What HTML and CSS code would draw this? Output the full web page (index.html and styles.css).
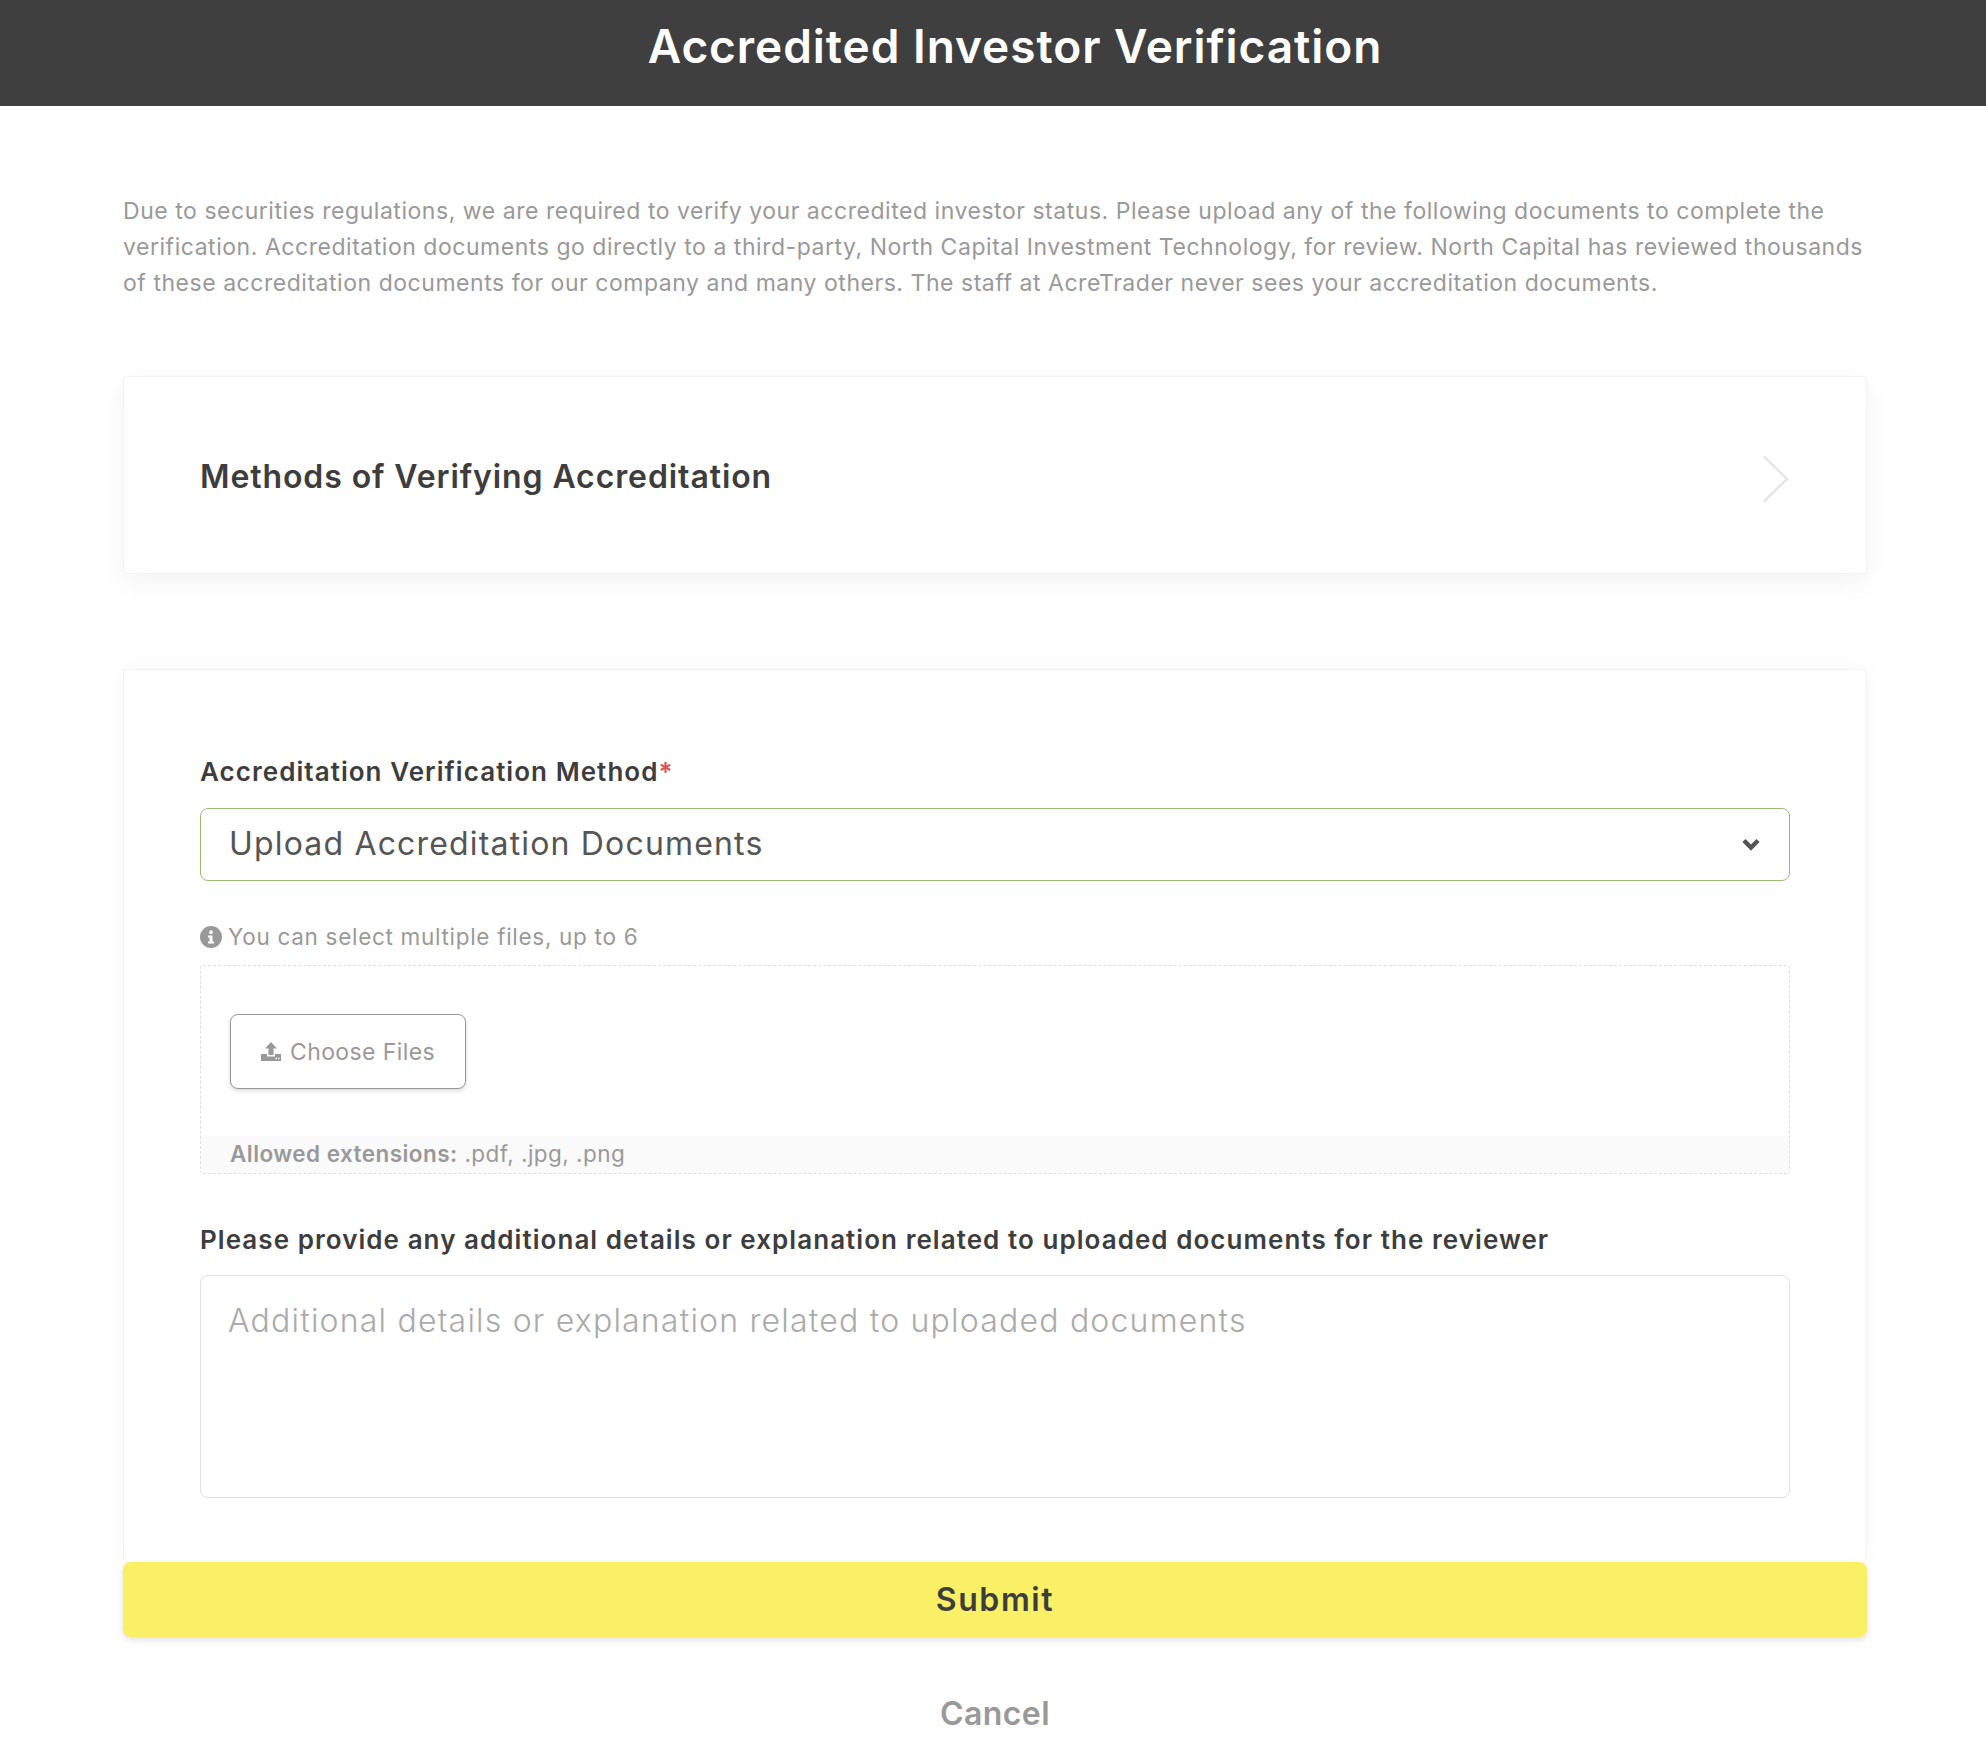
FILE: index.html
```html
<!DOCTYPE html>
<html lang="en">
<head>
    <meta charset="UTF-8">
    <title>Accredited Investor Verification</title>
    <link rel="stylesheet" href="styles.css">
</head>
<body>
    <header class="top-bar">
        <h1>Accredited Investor Verification</h1>
    </header>

    <main class="content">
        <p class="intro">Due to securities regulations, we are required to verify your accredited investor status. Please upload any of the following documents to complete the verification. Accreditation documents go directly to a third-party, North Capital Investment Technology, for review. North Capital has reviewed thousands of these accreditation documents for our company and many others. The staff at AcreTrader never sees your accreditation documents.</p>

        <section class="card methods">
            <h2>Methods of Verifying Accreditation</h2>
            <svg class="methods-arrow" width="28" height="48" viewBox="0 0 28 48">
                <path d="M2 1.500 L25 24 L2 46.500" fill="none" stroke="#e6e6e6" stroke-width="2.500"/>
            </svg>
        </section>

        <form class="card verify-form">
            <label class="field-label">Accreditation Verification Method<span class="required">*</span></label>
            <div class="select-box">
                <span>Upload Accreditation Documents</span>
                <svg width="20" height="15" viewBox="0 0 20 15">
                    <path d="M3 3.500 L10 10.500 L17 3.500" fill="none" stroke="#555" stroke-width="4.500"/>
                </svg>
            </div>

            <p class="files-note">
                <svg width="22" height="22" viewBox="0 0 22 22">
                    <circle cx="11" cy="11" r="11" fill="#999"/>
                    <circle cx="11" cy="6.200" r="1.900" fill="#fff"/>
                    <path d="M8 9.500h4.500v6H14v2H8v-2h1.500v-4H8z" fill="#fff"/>
                </svg>
                You can select multiple files, up to 6
            </p>
            <div class="dropzone">
                <div class="dropzone-body">
                    <button type="button" class="choose-btn">
                        <svg width="20" height="19" viewBox="0 0 20 19">
                            <path d="M10 0 L16 6.500 H12.500 V13 H7.500 V6.500 H4 Z M0 12 H6 V14.500 H14 V12 H20 V19 H0 Z" fill="#999"/>
                            <path d="M14.500 15.800h1.500v1.500h-1.500z M17 15.800h1.500v1.500H17z" fill="#fff"/>
                        </svg>
                        Choose Files
                    </button>
                </div>
                <div class="dropzone-foot"><b>Allowed extensions:</b> .pdf, .jpg, .png</div>
            </div>

            <label class="field-label details-label">Please provide any additional details or explanation related to uploaded documents for the reviewer</label>
            <textarea class="details" placeholder="Additional details or explanation related to uploaded documents"></textarea>
        </form>

        <button type="button" class="submit-btn">Submit</button>
        <a class="cancel-link">Cancel</a>
    </main>
</body>
</html>
```

FILE: styles.css
```css
* {
    box-sizing: border-box;
}

body {
    margin: 0;
    font-family: 'Inter', sans-serif;
    background-color: #fff;
    color: #3d3d3d;
}

.top-bar {
    height: 106px;
    background-color: #3f3f3f;
    text-align: center;
    padding-left: 44px;
}

.top-bar h1 {
    margin: 0;
    color: #fff;
    font-size: 46px;
    font-weight: 600;
    line-height: 92px;
    letter-spacing: 0.950px;
}

.content {
    width: 1744px;
    margin-left: 123px;
}

.intro {
    margin: 87px -8px 75px 0;
    font-size: 23px;
    line-height: 36px;
    letter-spacing: 0.535px;
    color: #999;
}

.card {
    background: #fff;
    border: 1px solid #f3f3f3;
    border-radius: 4px;
    box-shadow: 0 8px 28px rgba(0, 0, 0, 0.05);
}

.methods {
    height: 198px;
    padding: 0 76px 0 76px;
    margin-bottom: 95px;
    display: flex;
    align-items: center;
    justify-content: space-between;
}

.methods h2 {
    margin: 0;
    padding-top: 2px;
    font-size: 32px;
    font-weight: 600;
    letter-spacing: 0.900px;
    color: #3d3d3d;
}

.methods-arrow {
    margin-top: 8px;
}

.verify-form {
    height: 893px;
    padding: 84px 76px 0;
    border-bottom: none;
    box-shadow: 0 -2px 24px rgba(0, 0, 0, 0.03);
}

.field-label {
    display: block;
    font-size: 26px;
    font-weight: 600;
    line-height: 36px;
    letter-spacing: 1.050px;
    color: #3d3d3d;
}

.required {
    color: #d9534f;
}

.select-box {
    height: 73px;
    margin-top: 18px;
    padding: 0 28px;
    display: flex;
    align-items: center;
    justify-content: space-between;
    border: 1px solid #9bbb72;
    border-radius: 8px;
    font-size: 32px;
    letter-spacing: 1.170px;
    color: #555;
}

.select-box span {
    padding-bottom: 3px;
}

.files-note {
    margin: 33px 0 0;
    display: flex;
    align-items: center;
    gap: 6px;
    font-size: 22.500px;
    line-height: 46px;
    letter-spacing: 0.700px;
    color: #999;
}

.dropzone {
    height: 209px;
    margin-top: 5px;
    border: 1px dashed #ddd;
    border-radius: 3px;
    display: flex;
    flex-direction: column;
}

.dropzone-body {
    flex: 1;
    padding: 48px 29px 0;
}

.choose-btn {
    width: 236px;
    height: 75px;
    display: flex;
    align-items: center;
    justify-content: center;
    gap: 9px;
    background: #fff;
    border: 1px solid #999;
    border-radius: 8px;
    box-shadow: 0 2px 4px rgba(0, 0, 0, 0.15);
    font-family: inherit;
    font-size: 23px;
    letter-spacing: 0.400px;
    color: #999;
}

.dropzone-foot {
    height: 37px;
    padding-left: 29px;
    background-color: #fafafa;
    font-size: 22.500px;
    line-height: 36px;
    letter-spacing: 0.450px;
    color: #999;
}

.dropzone-foot b {
    font-weight: 600;
}

.details-label {
    margin-top: 48px;
}

.details {
    display: block;
    width: 100%;
    height: 223px;
    margin-top: 17px;
    padding: 23px 27px;
    border: 1px solid #e0e0e0;
    border-radius: 8px;
    resize: none;
    font-family: inherit;
    font-size: 32px;
    line-height: 44px;
    letter-spacing: 1.200px;
}

.details::placeholder {
    color: #aaa;
    font-weight: 300;
}

.submit-btn {
    display: block;
    width: 100%;
    height: 75px;
    background-color: #f9f066;
    border: none;
    border-radius: 8px;
    box-shadow: 0 3px 6px rgba(0, 0, 0, 0.12);
    font-family: inherit;
    font-size: 32px;
    font-weight: 600;
    letter-spacing: 1.600px;
    color: #3d3d3d;
}

.cancel-link {
    display: block;
    margin-top: 57px;
    text-align: center;
    font-size: 32px;
    font-weight: 600;
    line-height: 40px;
    letter-spacing: 0.400px;
    color: #999;
}
```
